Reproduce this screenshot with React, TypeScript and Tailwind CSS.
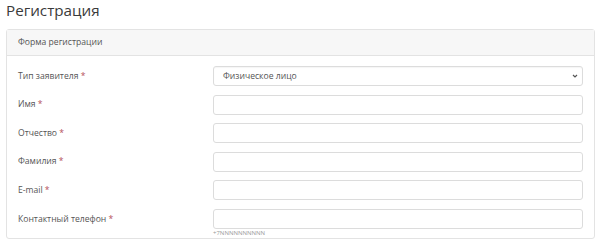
export default function App() {
  const fields = ["Имя", "Отчество", "Фамилия", "E-mail"];
  return (
    <div className="w-[600px] h-[240px] overflow-hidden bg-white font-['Open_Sans',sans-serif] text-[#555]">
      <div className="px-[6px]">
        <h1 className="text-[15.2px] leading-[20px] text-[#3a3a3a]">Регистрация</h1>
        <div className="mt-[9px] w-[589px] border border-[#e3e3e3] rounded-[3px]">
          <div className="h-[26px] bg-[#f7f7f7] border-b border-[#e3e3e3] px-[11px] flex items-center text-[8.6px]">
            Форма регистрации
          </div>
          <div className="px-[11px] pt-[10px] flex flex-col gap-[8.5px]">
            <div className="flex items-center h-[20px]">
              <label className="w-[195px] text-[8.6px]">
                Тип заявителя <span className="text-[#b5505a]">*</span>
              </label>
              <div className="flex-1 h-[20px] border border-[#dcdcdc] rounded-[3px] flex items-center justify-between pl-[9px] pr-[4px] text-[8.6px] shadow-[inset_0_1px_1px_rgba(0,0,0,0.04)]">
                <span>Физическое лицо</span>
                <svg width="6" height="4" viewBox="0 0 6 4">
                  <path d="M1 1l2 2l2-2" fill="none" stroke="#555" strokeWidth="1.2" />
                </svg>
              </div>
            </div>
            {fields.map((f) => (
              <div key={f} className="flex items-center h-[20px]">
                <label className="w-[195px] text-[8.6px]">
                  {f} <span className="text-[#b5505a]">*</span>
                </label>
                <div className="flex-1 h-[20px] border border-[#dcdcdc] rounded-[3px]" />
              </div>
            ))}
            <div className="flex items-start">
              <label className="w-[195px] text-[8.6px] leading-[20px]">
                Контактный телефон <span className="text-[#b5505a]">*</span>
              </label>
              <div className="flex-1">
                <div className="h-[20px] border border-[#dcdcdc] rounded-[3px]" />
                <div className="text-[6px] leading-[9px] text-[#999]">+7NNNNNNNNNN</div>
              </div>
            </div>
          </div>
        </div>
      </div>
    </div>
  );
}
